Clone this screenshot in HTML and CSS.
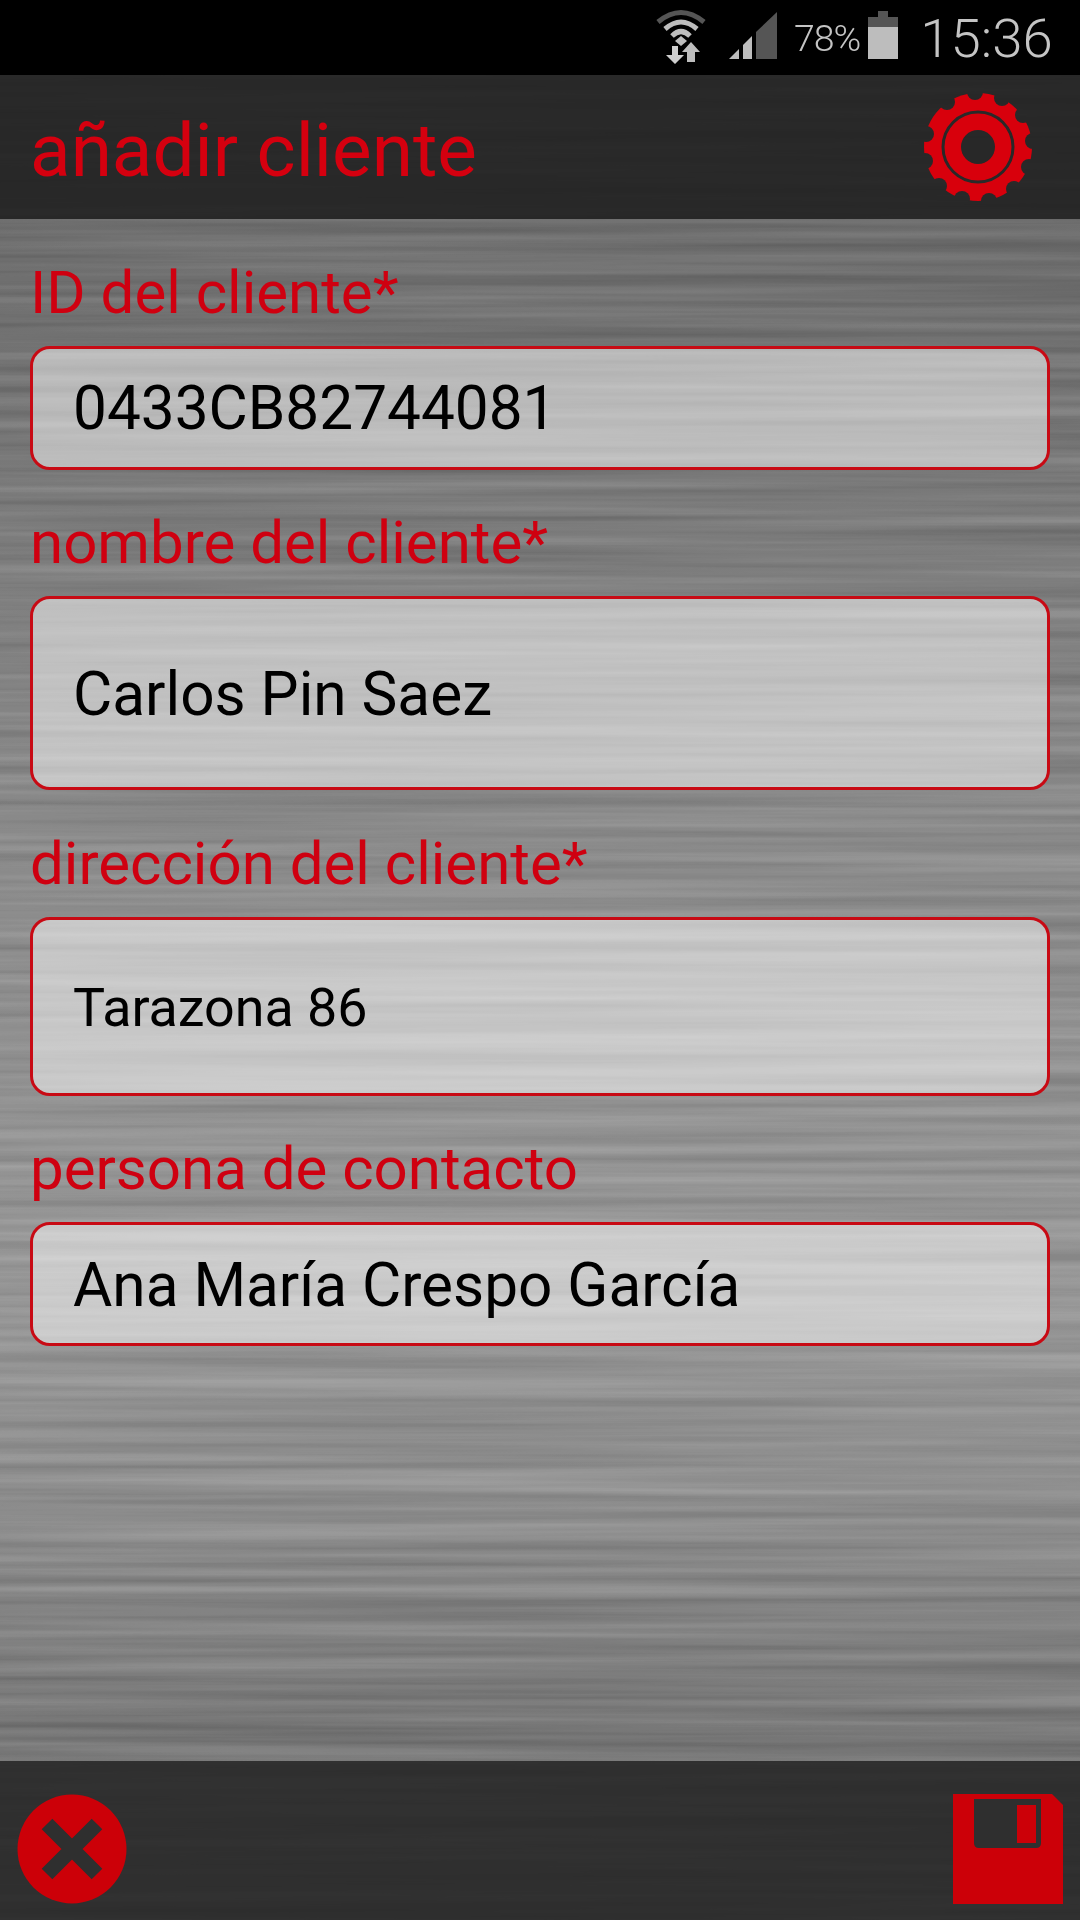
FILE: index.html
```html
<!DOCTYPE html>
<html lang="es">
<head>
    <meta charset="UTF-8">
    <meta name="viewport" content="width=device-width, initial-scale=1.0">
    <title>añadir cliente</title>
    <link rel="stylesheet" href="styles.css">
</head>
<body>
    <svg class="defs" width="0" height="0" aria-hidden="true">
        <filter id="brush" x="0" y="0" width="100%" height="100%" color-interpolation-filters="sRGB">
            <feTurbulence type="fractalNoise" baseFrequency="0.0012 0.09" numOctaves="4" seed="7"/>
            <feColorMatrix type="matrix" values="1.6 0 0 0 -0.3  1.6 0 0 0 -0.3  1.6 0 0 0 -0.3  0 0 0 0 1"/>
        </filter>
        <mask id="gear-cut">
            <rect x="-60" y="-60" width="120" height="120" fill="#fff"/>
            <g fill="#000">
                <circle cx="-3" cy="-55" r="8"/>
                <circle cx="24" cy="-49" r="8"/>
                <circle cx="45" cy="-32" r="8"/>
                <circle cx="55" cy="-6" r="8"/>
                <circle cx="51" cy="20" r="8"/>
                <circle cx="36" cy="42" r="8"/>
                <circle cx="11" cy="54" r="8"/>
                <circle cx="-16" cy="52" r="8"/>
                <circle cx="-39" cy="39" r="8"/>
                <circle cx="-53" cy="14" r="8"/>
                <circle cx="-52" cy="-13" r="8"/>
                <circle cx="-31" cy="-45" r="8"/>
            </g>
            <circle r="35" fill="none" stroke="#000" stroke-width="3"/>
            <circle r="17" fill="#000"/>
        </mask>
    </svg>

    <div class="status-bar">
        <svg class="wifi" width="60" height="60" viewBox="0 0 60 60">
            <path d="M7 18 Q30 -1 53 18" fill="none" stroke="#555" stroke-width="5"/>
            <path d="M14 25 Q30 11 46 25" fill="none" stroke="#bdbdbd" stroke-width="5"/>
            <path d="M21 32 Q30 23 39 32" fill="none" stroke="#bdbdbd" stroke-width="5"/>
            <path d="M30 32 L36 37 L30 42 L24 37 Z" fill="#bdbdbd"/>
            <path d="M21 42 H27 V51 H33 L24 60 L15 51 H21 Z" fill="#cfcfcf"/>
            <path d="M40 38 L49 48 H44 V58 H36 V48 H31 Z" fill="#bdbdbd"/>
        </svg>
        <svg class="signal" width="48" height="48" viewBox="0 0 48 48">
            <polygon points="0,47 10,37 10,47" fill="#bdbdbd"/>
            <polygon points="14,33 23,24 23,47 14,47" fill="#bdbdbd"/>
            <polygon points="27,20 48,0 48,47 27,47" fill="#555"/>
        </svg>
        <span class="battery-text">78%</span>
        <svg class="battery" width="30" height="48" viewBox="0 0 30 48">
            <rect x="10" y="0" width="10" height="6" fill="#555"/>
            <rect x="0" y="6" width="30" height="10" fill="#555"/>
            <rect x="0" y="16" width="30" height="32" fill="#bdbdbd"/>
        </svg>
        <span class="clock">15:36</span>
    </div>

    <header class="app-header">
        <svg class="texture" aria-hidden="true"><rect width="100%" height="100%" filter="url(#brush)"/></svg>
        <h1>añadir cliente</h1>
        <svg class="gear" width="116" height="116" viewBox="-58 -58 116 116">
            <circle r="54" fill="#d8000c" mask="url(#gear-cut)"/>
        </svg>
    </header>

    <main class="content">
        <svg class="texture" aria-hidden="true"><rect width="100%" height="100%" filter="url(#brush)"/></svg>
        <form class="client-form">
            <label class="field-label">ID del cliente*</label>
            <div class="field field-small">0433CB82744081</div>

            <label class="field-label">nombre del cliente*</label>
            <div class="field field-tall">Carlos Pin Saez</div>

            <label class="field-label">dirección del cliente*</label>
            <div class="field field-medium">Tarazona 86</div>

            <label class="field-label">persona de contacto</label>
            <div class="field field-small">Ana María Crespo García</div>
        </form>
    </main>

    <footer class="app-footer">
        <svg class="texture" aria-hidden="true"><rect width="100%" height="100%" filter="url(#brush)"/></svg>
        <svg class="cancel" width="110" height="110" viewBox="0 0 110 110">
            <circle cx="55" cy="55" r="54.5" fill="#cc0008"/>
            <path d="M30 30 L80 80 M80 30 L30 80" stroke="#2f2f2f" stroke-width="15"/>
        </svg>
        <svg class="save" width="110" height="110" viewBox="0 0 110 110">
            <path d="M0 0 H99 L110 11 V110 H0 Z" fill="#cc0008"/>
            <path d="M21 5 H88 V49 Q88 54 83 54 H26 Q21 54 21 49 Z" fill="#2f2f2f"/>
            <rect x="64" y="11" width="19" height="38" fill="#cc0008"/>
        </svg>
    </footer>
</body>
</html>
```

FILE: styles.css
```css
html, body {
    margin: 0;
    height: 100%;
}
body {
    width: 1080px;
    height: 1920px;
    display: flex;
    flex-direction: column;
    overflow: hidden;
    font-family: Roboto, "Liberation Sans", sans-serif;
    background: #000;
}
.defs {
    position: absolute;
}

/* status bar */
.status-bar {
    height: 75px;
    flex: none;
    display: flex;
    align-items: flex-start;
    background: #000;
    color: #c4c4c4;
}
.wifi {
    margin: 4px 0 0 651px;
}
.signal {
    margin: 12px 0 0 18px;
}
.battery-text {
    margin: 16px 0 0 17px;
    font-size: 37.5px;
    line-height: 44px;
    font-weight: 300;
    letter-spacing: -1px;
}
.battery {
    margin: 11px 0 0 8px;
}
.clock {
    margin: 7px 0 0 22px;
    font-size: 54.5px;
    line-height: 62px;
    font-weight: 300;
}

/* bars */
.app-header,
.app-footer,
.content {
    position: relative;
    overflow: hidden;
}
.texture {
    position: absolute;
    inset: 0;
    width: 100%;
    height: 100%;
    mix-blend-mode: overlay;
    opacity: 0.13;
}
.app-header {
    height: 144px;
    flex: none;
    box-sizing: border-box;
    display: flex;
    align-items: center;
    justify-content: space-between;
    padding: 0 44px 0 30px;
    background: #282828;
}
.app-header .texture,
.app-footer .texture {
    opacity: 0.05;
}
.app-header h1 {
    position: relative;
    margin: 6px 0 0;
    font-size: 74.7px;
    font-weight: 400;
    color: #d5000f;
}
.gear {
    position: relative;
}
.app-footer {
    height: 159px;
    flex: none;
    box-sizing: border-box;
    display: flex;
    align-items: center;
    justify-content: space-between;
    padding: 16px 17px 0;
    background: #2f2f2f;
}
.cancel, .save {
    position: relative;
}

/* form */
.content {
    flex: 1;
    background: linear-gradient(#6c6c6c 0, #7a7a7a 18%, #8a8a8a 40%, #969696 70%, #8c8c8c 84%, #757575 100%);
}
.client-form {
    position: relative;
    padding: 0 30px;
    display: flex;
    flex-direction: column;
}
.field-label {
    height: 126.5px;
    display: flex;
    align-items: flex-end;
    padding-bottom: 20px;
    box-sizing: border-box;
    font-size: 60px;
    line-height: 66px;
    color: #cf0010;
}
.field {
    box-sizing: border-box;
    display: flex;
    align-items: center;
    padding: 2px 0 0 40px;
    border: 3px solid #c80a14;
    border-radius: 20px;
    background: rgba(255, 255, 255, 0.5);
    font-size: 60.3px;
    color: #000;
}
.field-small {
    height: 124px;
}
.field-tall {
    height: 194px;
}
.field-medium {
    height: 179px;
    font-size: 53.8px;
}
```
